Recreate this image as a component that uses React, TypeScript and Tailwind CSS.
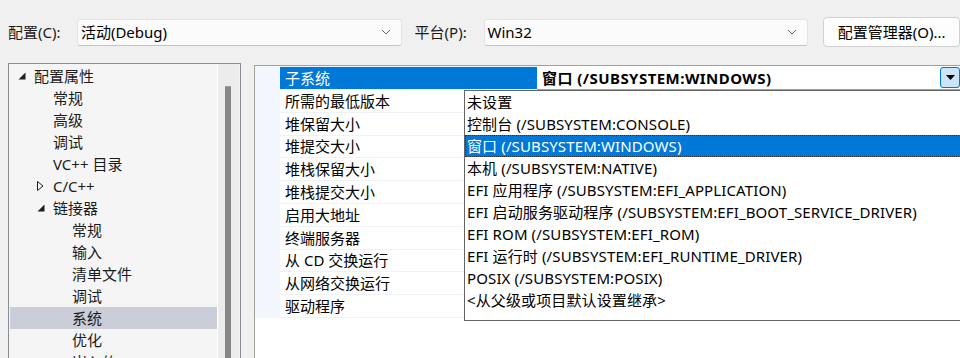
import React from "react";

const FONT = { fontFamily: '"Noto Sans", "Noto Sans CJK SC", sans-serif' };

function Chevron() {
  return (
    <svg width="10" height="6" viewBox="0 0 10 6" className="shrink-0">
      <path d="M1 1 L5 5 L9 1" fill="none" stroke="#6b6b6b" strokeWidth="1" />
    </svg>
  );
}

function Combo({ text, w }: { text: string; w: string }) {
  return (
    <div
      className={`${w} h-[27px] flex items-center justify-between bg-[#fbfbfb] border border-[#e3e3e3] border-b-[#c4c4c4] rounded-[3px] pl-[3px] pr-[10px] text-[15px] leading-[20px] text-black`}
    >
      <span>{text}</span>
      <Chevron />
    </div>
  );
}

function Filled() {
  return (
    <svg width="8" height="8" viewBox="0 0 8 8">
      <path d="M7.5 0.5 L7.5 7.5 L0.5 7.5 Z" fill="#1e1e1e" />
    </svg>
  );
}

function Hollow() {
  return (
    <svg width="7" height="10" viewBox="0 0 7 10">
      <path d="M0.5 0.5 L6 5 L0.5 9.5 Z" fill="none" stroke="#1e1e1e" strokeWidth="1" />
    </svg>
  );
}

type TreeItem = { t: string; lvl: number; icon?: "f" | "h"; sel?: boolean };
const tree: TreeItem[] = [
  { t: "配置属性", lvl: 0, icon: "f" },
  { t: "常规", lvl: 1 },
  { t: "高级", lvl: 1 },
  { t: "调试", lvl: 1 },
  { t: "VC++ 目录", lvl: 1 },
  { t: "C/C++", lvl: 1, icon: "h" },
  { t: "链接器", lvl: 1, icon: "f" },
  { t: "常规", lvl: 2 },
  { t: "输入", lvl: 2 },
  { t: "清单文件", lvl: 2 },
  { t: "调试", lvl: 2 },
  { t: "系统", lvl: 2, sel: true },
  { t: "优化", lvl: 2 },
  { t: "嵌入的 IDL", lvl: 2 },
];

const props = [
  "所需的最低版本",
  "堆保留大小",
  "堆提交大小",
  "堆栈保留大小",
  "堆栈提交大小",
  "启用大地址",
  "终端服务器",
  "从 CD 交换运行",
  "从网络交换运行",
  "驱动程序",
];

const options = [
  "未设置",
  "控制台 (/SUBSYSTEM:CONSOLE)",
  "窗口 (/SUBSYSTEM:WINDOWS)",
  "本机 (/SUBSYSTEM:NATIVE)",
  "EFI 应用程序 (/SUBSYSTEM:EFI_APPLICATION)",
  "EFI 启动服务驱动程序 (/SUBSYSTEM:EFI_BOOT_SERVICE_DRIVER)",
  "EFI ROM (/SUBSYSTEM:EFI_ROM)",
  "EFI 运行时 (/SUBSYSTEM:EFI_RUNTIME_DRIVER)",
  "POSIX (/SUBSYSTEM:POSIX)",
  "<从父级或项目默认设置继承>",
];

export default function App() {
  return (
    <div
      style={FONT}
      className="relative w-[960px] h-[358px] overflow-hidden bg-[#f0f0f0] text-[15px] text-[#1b1b1b]"
    >
      {/* Top toolbar */}
      <div className="flex items-center h-[30px] mt-[17px]">
        <span className="ml-[8px] w-[69px] leading-[20px]">配置(C):</span>
        <Combo text="活动(Debug)" w="w-[325px]" />
        <span className="ml-[13px] w-[69px] leading-[20px]">平台(P):</span>
        <Combo text="Win32" w="w-[325px]" />
        <div className="ml-[15px] w-[137px] h-[30px] flex items-center justify-center bg-[#fdfdfd] border border-[#d0d0d0] rounded-[4px] leading-[20px] text-black">
          配置管理器(O)...
        </div>
      </div>

      {/* Main area */}
      <div className="flex mt-[16px]">
        {/* Tree */}
        <div className="ml-[8px] w-[233px] h-[300px] border-l border-t border-r border-[#8a8e94] flex bg-[#f5f5f5]">
          <div className="w-[209px] pt-[1px] border-r border-white">
            {tree.map((it, i) => (
              <div
                key={i}
                className={`ml-[1px] h-[22px] flex items-center relative ${it.sel ? "bg-[#cbcdd9]" : ""}`}
              >
                {it.icon && (
                  <span
                    className={`absolute flex items-center ${it.lvl === 0 ? "left-[8px]" : "left-[27px]"}`}
                  >
                    {it.icon === "f" ? <Filled /> : <Hollow />}
                  </span>
                )}
                <span
                  className={`leading-[20px] ${it.lvl === 0 ? "ml-[24px]" : it.lvl === 1 ? "ml-[43px]" : "ml-[62px]"}`}
                >
                  {it.t}
                </span>
              </div>
            ))}
          </div>
          <div className="w-[21px] bg-[#ececec] pt-[22px]">
            <div className="ml-[7px] w-[6px] h-[280px] bg-[#878787] border-t border-[#9b9b9b]" />
          </div>
        </div>

        {/* Property grid */}
        <div className="ml-[13px] mt-[2px] flex-1 h-[300px] border-l border-t border-[#a0a0a0] bg-white">
          <div className="flex h-[24px] bg-[#f3f6fc]">
            <div className="w-[25px]" />
            <div className="w-[257px] mt-[1px] h-[22px] bg-[#0078d7] text-white flex items-center pl-[5px] leading-[20px]">
              子系统
            </div>
            <div className="flex-1 bg-white border-b border-[#a0a0a0] flex items-center pl-[5px] font-bold tracking-[0.45px] text-black leading-[20px] relative">
              窗口 (/SUBSYSTEM:WINDOWS)
              <div className="absolute left-[403px] top-[1px] w-[20px] h-[21px] bg-[#cce4f7] border border-[#0078d7] rounded-[3px] flex items-center justify-center">
                <svg width="9" height="5" viewBox="0 0 9 5">
                  <path d="M0 0 L9 0 L4.5 5 Z" fill="#000" />
                </svg>
              </div>
            </div>
          </div>
          {props.map((p, i) => (
            <div key={i} className="flex h-[22.8px] bg-[#f3f6fc]">
              <div className="w-[25px]" />
              <div className="flex-1 bg-white border-b border-[#edf1f8] flex items-center pl-[5px] text-black leading-[20px]">
                {p}
              </div>
            </div>
          ))}
        </div>
      </div>

      {/* Open dropdown list */}
      <div className="absolute left-[464px] top-[90px] w-[500px] h-[231px] bg-white border border-[#646464] text-black tracking-[0.12px]">
        {options.map((o, i) => (
          <div
            key={i}
            className={`h-[22px] flex items-center pl-[2px] leading-[20px] whitespace-nowrap ${
              i === 2 ? "bg-[#0078d7] text-white outline-1 outline-dotted outline-[#333] -outline-offset-1" : ""
            }`}
          >
            {o}
          </div>
        ))}
      </div>
    </div>
  );
}
